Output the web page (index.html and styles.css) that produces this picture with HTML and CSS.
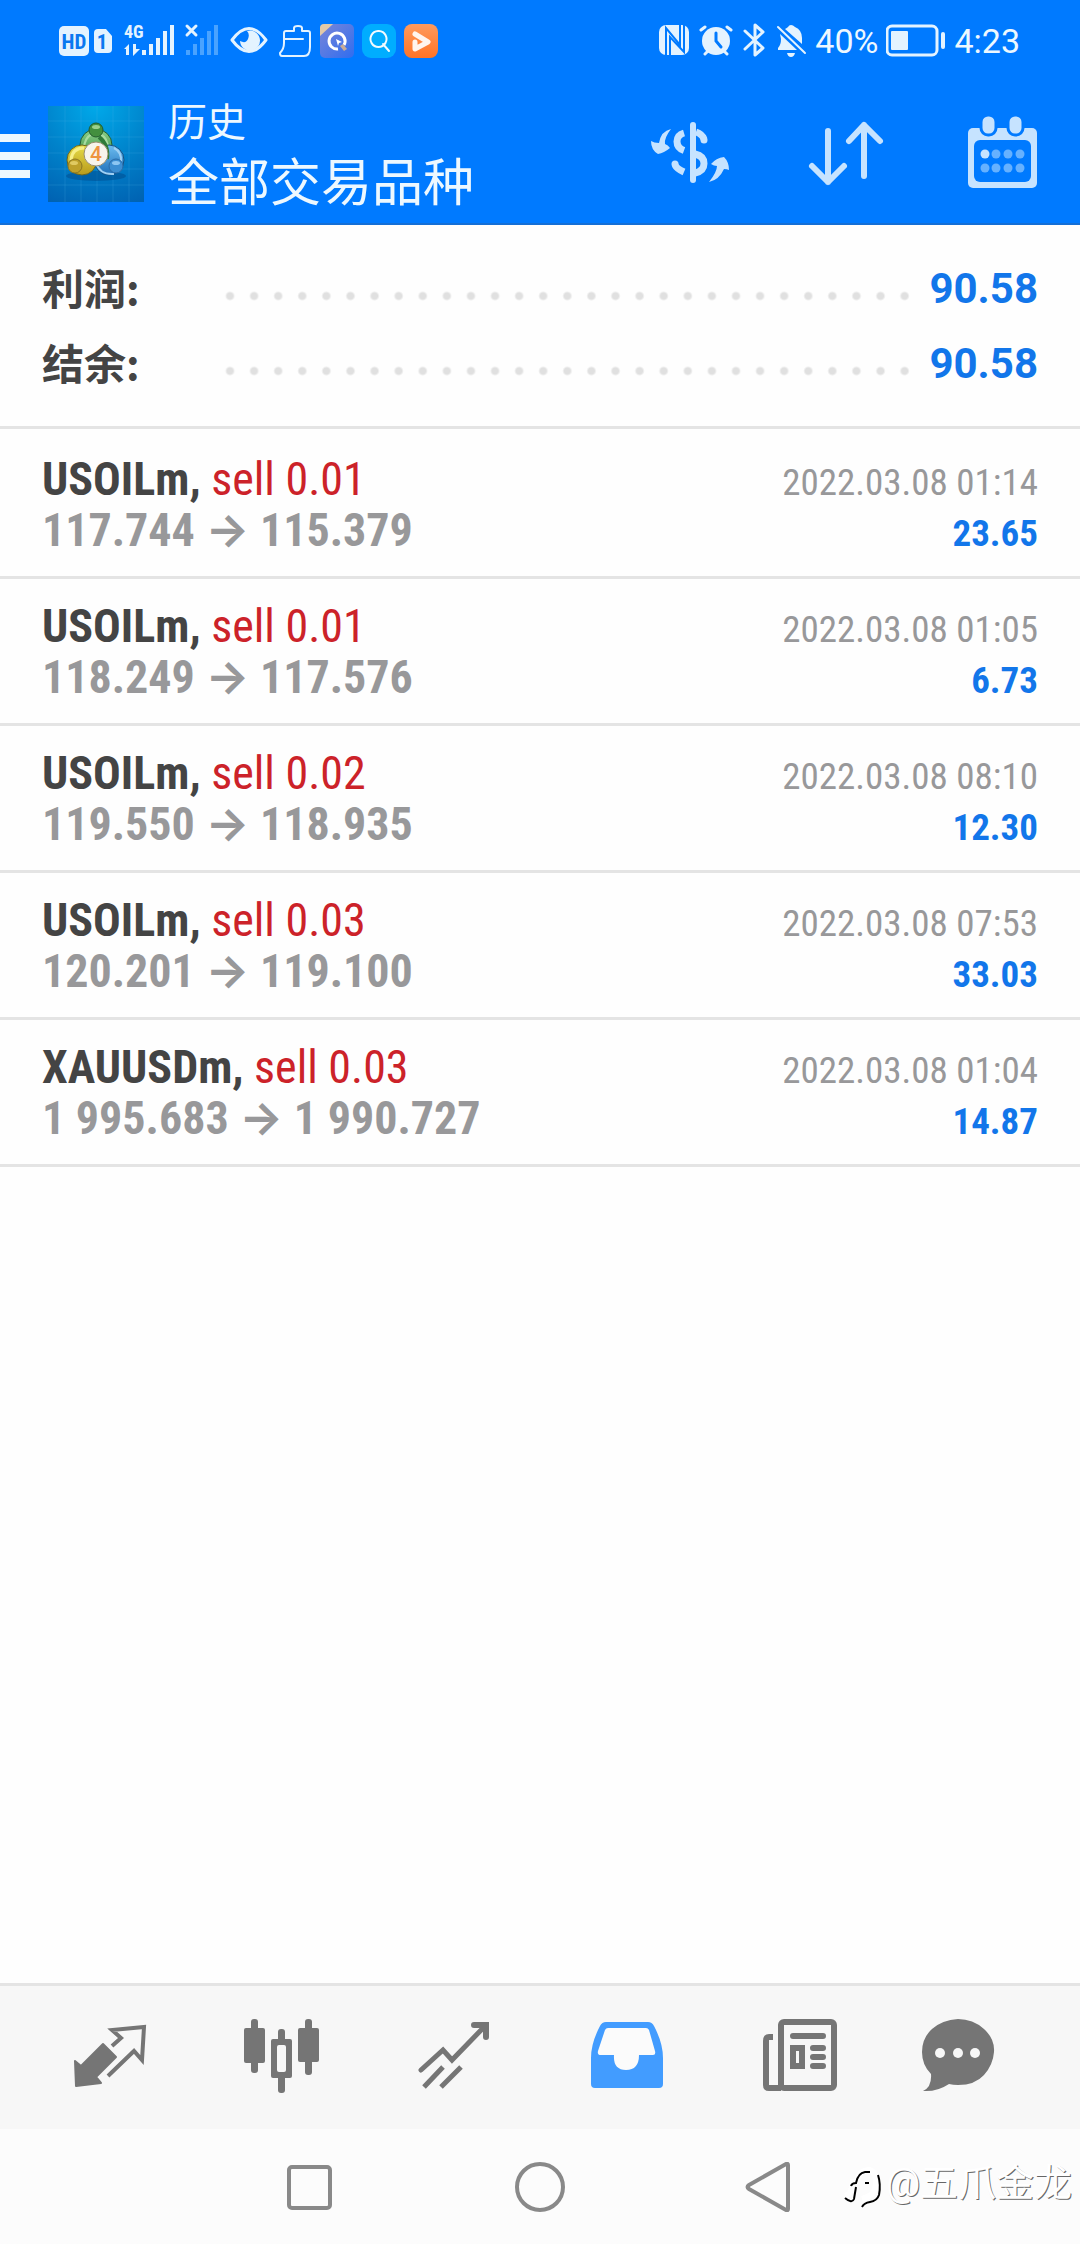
FILE: index.html
```html
<!DOCTYPE html>
<html lang="zh-CN">
<head>
<meta charset="utf-8">
<meta name="viewport" content="width=device-width, initial-scale=1">
<title>历史</title>
<link rel="stylesheet" href="styles.css">
</head>
<body>
<header class="header">
  <div class="status">
    <div class="status-group">
      <svg class="glyph" width="56" height="40" viewBox="58 20 56 40">
        <rect x="59" y="26" width="30" height="30" rx="5"/>
        <path d="M94 33q0-4 4-4h8l6 7v13q0 4-4 4H98q-4 0-4-4z"/>
        <text class="glyph-cut" x="74" y="49" font-size="21" text-anchor="middle">HD</text>
        <text class="glyph-cut" x="102" y="49" font-size="21" text-anchor="middle">1</text>
      </svg>
      <svg class="glyph" width="54" height="40" viewBox="122 20 54 40">
        <text class="glyph-net" x="124" y="38" font-size="18">4G</text>
        <path d="M142 50h4v5h-4zM149 44h4v11h-4zM156 38h4v17h-4zM163 31h4v24h-4zM170 25h4v30h-4z"/>
        <path d="M124 49l5-5v11h-3v-6zM133 44h3v5h4l-7 7z"/>
      </svg>
      <svg class="glyph" width="36" height="40" viewBox="184 20 36 40">
        <path class="dim" d="M186 50h4v5h-4zM193 44h4v11h-4zM200 38h4v17h-4zM207 31h4v24h-4zM214 25h4v30h-4z"/>
        <path class="line" stroke-width="3" d="M187 26l9 9M196 26l-9 9"/>
      </svg>
      <svg class="glyph" width="42" height="40" viewBox="228 20 42 40">
        <path class="line" stroke-width="3" d="M232 40q17-23 34 0q-17 23-34 0z"/>
        <path d="M247 31a10 10 0 1 1-7 10q6 3 8-2t-1-8z"/>
      </svg>
      <svg class="glyph" width="34" height="40" viewBox="278 20 34 40">
        <path class="line" stroke-width="2" d="M294 31v-3q0-2 4-2t4 2v3h6q2 0 2 2v14q0 9-6 9h-22q-2 0-2-3q4-4 4-10V33q0-2 2-2zM284 39h19"/>
      </svg>
      <svg width="34" height="40" viewBox="320 20 34 40">
        <defs><linearGradient id="browser" x2="1" y2="1"><stop offset="0" stop-color="#7a86d8"/><stop offset="1" stop-color="#2f6df0"/></linearGradient></defs>
        <rect x="320" y="24" width="34" height="34" rx="5" fill="url(#browser)"/>
        <path d="M320 36V28q0-4 4-4h9z" fill="#e2c9a8"/>
        <path d="M338 49a8 8 0 1 1 6-4" fill="none" stroke="#fff" stroke-width="3"/>
        <path d="M336 39l6 3-3 1-1 3z" fill="#fff"/>
        <path d="M340 46l3-2 4 5-3 2z" fill="#c8ac98"/>
      </svg>
      <svg width="34" height="40" viewBox="362 20 34 40">
        <rect x="362" y="24" width="34" height="34" rx="9" fill="#00adff"/>
        <path d="M383 44l6 7M378 31a8 8 0 1 0 1 0z" fill="none" stroke="#f0faff" stroke-width="2" stroke-linecap="round"/>
      </svg>
      <svg width="34" height="40" viewBox="404 20 34 40">
        <defs><linearGradient id="video" x2="0" y2="1"><stop offset="0" stop-color="#ff9a5c"/><stop offset="1" stop-color="#ff7326"/></linearGradient></defs>
        <rect x="404" y="24" width="34" height="34" rx="8" fill="url(#video)"/>
        <path d="M415 34l13 8-13 7v-7" fill="none" stroke="#fff5ee" stroke-width="5" stroke-linejoin="round" stroke-linecap="round"/>
      </svg>
    </div>
    <div class="status-group">
      <svg class="glyph" width="34" height="40" viewBox="656 20 34 40">
        <rect x="658" y="25" width="30" height="30" rx="7"/>
        <path d="M665 55V28l14 17V25M669 55V37l14 15V25" fill="none" stroke="#007aff" stroke-width="2"/>
      </svg>
      <svg class="glyph" width="34" height="40" viewBox="698 20 34 40">
        <circle cx="715" cy="41" r="14"/>
        <path class="line" stroke-width="3" d="M700 30l4-3M730 30l-4-3M704 54l3-3M726 54l-3-3"/>
        <path d="M715 33v8l5 6" fill="none" stroke="#007aff" stroke-width="3" stroke-linecap="round"/>
      </svg>
      <svg class="glyph" width="26" height="40" viewBox="740 20 26 40">
        <path class="line" stroke-width="3" d="M744 31l18 17-8 7V25l8 7-18 17"/>
      </svg>
      <svg class="glyph" width="32" height="40" viewBox="774 20 32 40">
        <path d="M784 29q2-1 3-2 1-2 3-2t4 2q7 3 7 11v6zM779 34l17 16h-19v-2q3-3 3-9zM786 53h8q-1 4-4 4t-4-4z"/>
        <path class="line" stroke-width="2" d="M777 27l27 26"/>
      </svg>
      <span class="status-text">40%</span>
      <svg class="glyph" width="60" height="40" viewBox="884 20 60 40">
        <rect class="line" stroke-width="3" x="885" y="26" width="50" height="29" rx="5"/>
        <rect x="889" y="31" width="17" height="19" rx="1"/><rect x="939" y="32" width="4" height="17" rx="2"/>
      </svg>
      <time class="status-text">4:23</time>
    </div>
  </div>
  <div class="appbar">
    <button class="menu" aria-label="菜单">
      <svg width="30" height="90" viewBox="0 108 30 90"><path fill="#edf8ff" d="M0 133h30v8H0zM0 151h30v8H0zM0 169h30v8H0z"/></svg>
    </button>
    <svg class="logo" width="96" height="96" viewBox="0 0 96 96">
      <defs>
        <radialGradient id="sky" cx=".5" cy="0" r="1.1"><stop offset="0" stop-color="#00a9ea"/><stop offset=".5" stop-color="#0084cc"/><stop offset="1" stop-color="#0062b2"/></radialGradient>
        <linearGradient id="green" x2="0" y2="1"><stop offset="0" stop-color="#8fd08a"/><stop offset="1" stop-color="#2f8a3a"/></linearGradient>
        <linearGradient id="gold" x2="0" y2="1"><stop offset="0" stop-color="#e6dc48"/><stop offset="1" stop-color="#b99a1c"/></linearGradient>
        <linearGradient id="blue" x2="0" y2="1"><stop offset="0" stop-color="#6dbdf0"/><stop offset="1" stop-color="#1d6db8"/></linearGradient>
      </defs>
      <path fill="url(#sky)" d="M0 0h96v96H0z"/>
      <path stroke="#4fb8ea" stroke-opacity=".2" fill="none" d="M17 0v96M33 0v96M49 0v96M65 0v96M81 0v96M0 15h96M0 31h96M0 47h96M0 63h96M0 79h96"/>
      <ellipse cx="48" cy="70" rx="30" ry="5" fill="#003f7c" opacity=".4"/>
      <circle cx="48" cy="39" r="16" fill="url(#green)" stroke="#245f31"/>
      <path d="M36 43q0-11 8-15M60 43q0-11-8-15" fill="none" stroke="#a8dba0" stroke-width="2"/>
      <circle cx="34" cy="54" r="15" fill="url(#gold)" stroke="#6f661c"/>
      <path d="M23 54q1-12 13-12" fill="none" stroke="#f6ee86" stroke-width="3"/>
      <circle cx="61" cy="54" r="15" fill="url(#blue)" stroke="#175182"/>
      <path d="M48 57q4 12 18 11M66 42q8 4 7 14" fill="none" stroke="#9fd0f4" stroke-width="2"/>
      <path d="M51 31q10 8 8 22" fill="none" stroke="#2f7a38" stroke-width="4"/>
      <circle cx="48" cy="24" r="7" fill="#438f3e" stroke="#235c2d"/>
      <circle cx="27" cy="60" r="7" fill="#bda02a" stroke="#8a7622"/>
      <circle cx="68" cy="60" r="7" fill="#3b8ed2" stroke="#2a6ba8"/>
      <ellipse cx="48" cy="21" rx="4" ry="2" fill="#9bd08c"/><ellipse cx="26" cy="57" rx="4" ry="2" fill="#e0ca62"/><ellipse cx="68" cy="57" rx="4" ry="2" fill="#8cc6f2"/>
      <circle cx="48" cy="48" r="12" fill="#f7f4ec" stroke="#9a8f70"/>
      <text x="48" y="55" font-size="21" font-weight="500" text-anchor="middle" fill="#ee9440">4</text>
    </svg>
    <div class="titles">
      <h1 class="title">历史</h1>
      <p class="subtitle">全部交易品种</p>
    </div>
    <div class="actions">
      <button class="action" aria-label="交易品种">
        <svg width="90" height="90" viewBox="645 108 90 90" fill="#c6e3ff">
          <rect x="690" y="121" width="6" height="61" rx="3"/>
          <path fill="none" stroke="#c6e3ff" stroke-width="7" d="M684 132q-7 2-7 8.500t7 9M696 131q6 2 8 7M695 153q9 2 9 9.500t-9 9.500"/>
          <path fill="none" stroke="#c6e3ff" stroke-width="7" d="M675 164q2 4 9 7"/>
          <circle cx="704" cy="139" r="3.500"/><circle cx="675" cy="163" r="3.500"/>
          <path d="M671 128q-10 2-12 14q-5 0-8-2q0 9 7 13q6-1 12-6q-2-3-5-4q-1-6 6-15zM709 181q10-2 15-13q3 0 5 1q0-8-5-13q-8 1-13 7q3 2 6 2q0 6-8 16z"/>
        </svg>
      </button>
      <button class="action" aria-label="排序">
        <svg width="90" height="90" viewBox="801 108 90 90" fill="none" stroke="#c6e3ff" stroke-width="6" stroke-linecap="round" stroke-linejoin="round"><path d="M828 130v51M812 165l16 16 16-16M864 175v-51M849 140l15-16 16 16"/></svg>
      </button>
      <button class="action" aria-label="日期">
        <svg width="90" height="90" viewBox="957 108 90 90">
          <rect x="968" y="127" width="69" height="60" rx="5" fill="#c6e3ff"/><rect x="974" y="139" width="57" height="42" rx="6" fill="#007aff"/>
          <g fill="#c6e3ff" stroke="#007aff" stroke-width="3"><rect x="981" y="114" width="15" height="20" rx="7"/><rect x="1008" y="114" width="15" height="20" rx="7"/></g>
          <g fill="#66b1ff"><circle cx="996" cy="153" r="4.500"/><circle cx="1008" cy="153" r="4.500"/><circle cx="1020" cy="153" r="4.500"/><circle cx="985" cy="167" r="4.500"/><circle cx="996" cy="167" r="4.500"/><circle cx="1008" cy="167" r="4.500"/><circle cx="1020" cy="167" r="4.500"/></g>
          <circle cx="985" cy="153" r="4.500" fill="#c6e3ff"/>
        </svg>
      </button>
    </div>
  </div>
</header>

<main class="content">
  <dl class="summary">
    <div class="summary-row"><dt>利润:</dt><dd>90.58</dd></div>
    <div class="summary-row"><dt>结余:</dt><dd>90.58</dd></div>
  </dl>
  <ul class="trades">
    <li class="trade"><span class="deal"><b>USOILm,</b> <span class="side">sell 0.01</span></span><time class="date">2022.03.08 01:14</time><span class="prices">117.744 → 115.379</span><span class="profit">23.65</span></li>
    <li class="trade"><span class="deal"><b>USOILm,</b> <span class="side">sell 0.01</span></span><time class="date">2022.03.08 01:05</time><span class="prices">118.249 → 117.576</span><span class="profit">6.73</span></li>
    <li class="trade"><span class="deal"><b>USOILm,</b> <span class="side">sell 0.02</span></span><time class="date">2022.03.08 08:10</time><span class="prices">119.550 → 118.935</span><span class="profit">12.30</span></li>
    <li class="trade"><span class="deal"><b>USOILm,</b> <span class="side">sell 0.03</span></span><time class="date">2022.03.08 07:53</time><span class="prices">120.201 → 119.100</span><span class="profit">33.03</span></li>
    <li class="trade"><span class="deal"><b>XAUUSDm,</b> <span class="side">sell 0.03</span></span><time class="date">2022.03.08 01:04</time><span class="prices">1 995.683 → 1 990.727</span><span class="profit">14.87</span></li>
  </ul>
</main>

<nav class="tabs">
  <button class="tab" aria-label="行情">
    <svg width="96" height="96" viewBox="62 2010 96 96">
      <path fill="#757575" stroke="#757575" stroke-width="2" stroke-linejoin="round" d="M75 2061l6 5 22-22 13 13-20 20 5 6-25 3z"/>
      <path fill="none" stroke="#757575" stroke-width="4" d="M112 2046l9-8-9-8 32-3-2 33-8-9-26 25"/>
    </svg>
  </button>
  <button class="tab" aria-label="图表">
    <svg width="96" height="96" viewBox="234 2010 96 96" fill="#757575">
      <rect x="244" y="2028" width="21" height="35" rx="2"/><rect x="251" y="2019" width="7" height="54" rx="3"/>
      <rect x="298" y="2028" width="21" height="34" rx="2"/><rect x="305" y="2019" width="7" height="56" rx="3"/>
      <rect x="278" y="2029" width="7" height="64" rx="3"/><rect x="271" y="2039" width="21" height="39" rx="2"/><rect x="277" y="2045" width="9" height="27" rx="2" fill="#f7f7f7"/>
    </svg>
  </button>
  <button class="tab" aria-label="交易">
    <svg width="96" height="96" viewBox="406 2010 96 96" fill="none" stroke="#757575" stroke-width="5" stroke-linecap="round"><path d="M421 2070l22-20 9 10 34-35"/><path stroke-width="6" d="M474 2025h12v12"/><path stroke-linecap="butt" d="M424 2087l19-20M441 2087l20-20"/></svg>
  </button>
  <button class="tab" aria-label="历史" aria-current="page">
    <svg width="96" height="96" viewBox="578 2010 96 96">
      <path fill="#429cff" d="M606 2022h42q4 0 6 4q9 17 9 32v26q0 4-4 4h-64q-4 0-4-4v-26q0-15 9-32q2-4 6-4z"/>
      <path fill="#fbfbfb" d="M608 2028h38q2 0 3 2l6 21q1 4-2 4h-14q0 15-13 15t-12-15h-13q-4 0-3-4l7-21q1-2 3-2z"/>
    </svg>
  </button>
  <button class="tab" aria-label="新闻">
    <svg width="96" height="96" viewBox="750 2010 96 96" fill="none" stroke="#757575" stroke-width="6">
      <rect x="781" y="2022" width="53" height="66" rx="3"/><path d="M773 2037h-4q-3 0-3 4v44q0 3 3 3h12"/>
      <path stroke-linecap="round" d="M793 2036h30M813 2048h10M813 2057h10M813 2066h10"/>
      <rect x="793" y="2048" width="9" height="18"/>
    </svg>
  </button>
  <button class="tab" aria-label="消息">
    <svg width="96" height="96" viewBox="922 2010 96 96">
      <path fill="#757575" d="M931 2074q-9-9-9-22q0-14 10-23t26-10q15 0 26 10t10 23-10 23-26 10q-5 0-9-1q-12 8-26 7q9-4 8-17z"/>
      <g fill="#f7f7f7"><circle cx="940" cy="2053" r="5"/><circle cx="958" cy="2053" r="5"/><circle cx="975" cy="2053" r="5"/></g>
    </svg>
  </button>
</nav>

<footer class="system">
  <button class="key" aria-label="最近任务"><svg width="50" height="50" viewBox="0 0 50 50"><rect x="4" y="5" width="41" height="41" rx="3"/></svg></button>
  <button class="key" aria-label="主屏幕"><svg width="50" height="50" viewBox="0 0 50 50"><circle cx="25" cy="25" r="23"/></svg></button>
  <button class="key" aria-label="返回"><svg width="50" height="50" viewBox="0 0 50 50"><path d="M4 23L41 2q2-1 2 1v44q0 2-2 1L4 27q-3-2 0-4z"/></svg></button>
  <div class="watermark">
    <svg width="46" height="54" viewBox="0 6 46 54" fill="none">
      <path stroke="#fff" stroke-width="6" d="M5 46q7-2 8-14h4q1-11 12-12 8 2 7 14-1 12-14 15"/>
      <path stroke="#000" stroke-width="2" d="M5 48q7 6 9 1l2-12M11 36q1-3 5-3 2-10 9-11h5M25 33h4M38 25q3 9 1 20-2 6-9 7-6 1-8 5"/>
    </svg>
    <span>@五爪金龙</span>
  </div>
</footer>
</body>
</html>
```
FILE: styles.css
```css
* {
  box-sizing: border-box;
  margin: 0;
  padding: 0;
}

body {
  display: flex;
  flex-direction: column;
  min-height: 100vh;
  background: #fefefe;
  color: #444;
  font-family: Roboto, "Noto Sans CJK SC", sans-serif;
}

button {
  border: 0;
  background: none;
  cursor: pointer;
}

svg {
  display: block;
  flex: none;
}

/* Blue header: status line and app bar */
.header {
  background: #007aff;
  border-bottom: 2px solid #146fd6;
  color: #edf8ff;
}

.status {
  display: flex;
  justify-content: space-between;
  height: 80px;
  padding: 20px 60px 20px 58px;
}

.status-group {
  display: flex;
  gap: 8px;
}

.status-text {
  font-size: 34px;
  line-height: 42px;
}

.glyph {
  fill: #e4f3ff;
}

.glyph .line {
  fill: none;
  stroke: #e4f3ff;
  stroke-linecap: round;
  stroke-linejoin: round;
}

.glyph .dim {
  fill: #4aa3ff;
}

.glyph-cut {
  fill: #0a78f0;
  font-family: "Roboto Condensed", Roboto, sans-serif;
  font-weight: 700;
}

.glyph-net {
  font-family: "Roboto Condensed", Roboto, sans-serif;
  font-weight: 700;
}

.appbar {
  display: flex;
  align-items: center;
  height: 143px;
  padding-top: 4px;
}

.logo {
  margin: 0 24px 0 18px;
}

.titles {
  flex: 1;
  padding-top: 6px;
}

.title {
  font-size: 39px;
  font-weight: 400;
  line-height: 54px;
}

.subtitle {
  font-size: 51px;
  line-height: 68px;
}

.actions {
  display: flex;
}

.action {
  display: flex;
  justify-content: center;
  width: 156px;
}

/* Totals */
.content {
  flex: 1;
}

.summary {
  padding: 26px 42px 25px;
  border-bottom: 3px solid #e4e4e4;
}

.summary-row {
  display: flex;
  height: 75px;
  font-size: 42px;
  font-weight: 700;
  line-height: 75px;
}

.summary-row dt {
  width: 176px;
  font-family: "Noto Sans CJK SC", sans-serif;
  line-height: 71px;
}

.summary-row dd {
  display: flex;
  flex: 1;
  color: #1276ea;
}

.summary-row dd::before {
  flex: 1;
  margin-right: 12px;
  background: radial-gradient(circle at 12px 45px, #e0e0e0 3px, transparent 5px) 0 0 / 24px 75px space no-repeat;
  content: "";
}

/* Closed trades */
.trades {
  padding-top: 3px;
  list-style: none;
}

.trade {
  display: grid;
  grid-template-columns: 1fr auto;
  align-items: baseline;
  padding: 22px 42px 20px;
  border-bottom: 3px solid #e4e4e4;
  font-family: "Roboto Condensed", Inter, "Noto Sans CJK SC", sans-serif;
  font-size: 46px;
  line-height: 51px;
}

.side {
  color: #cc2229;
}

.prices {
  color: #98989a;
  font-weight: 700;
}

.date,
.profit {
  font-size: 37px;
  line-height: 40px;
  text-align: right;
}

.date {
  color: #98989a;
}

.profit {
  color: #1276ea;
  font-weight: 700;
}

/* Bottom tabs and system keys */
.tabs {
  display: flex;
  padding: 24px 24px 23px;
  border-top: 3px solid #e4e4e4;
  background: #f7f7f7;
}

.tab {
  display: flex;
  flex: 1;
  justify-content: center;
}

.system {
  position: relative;
  display: flex;
  justify-content: center;
  height: 115px;
  background: #fcfcfc;
}

.key {
  display: flex;
  align-items: center;
  justify-content: center;
  width: 230px;
}

.key svg {
  fill: none;
  stroke: #898989;
  stroke-width: 4px;
}

.watermark {
  position: absolute;
  right: 8px;
  bottom: 34px;
  display: flex;
  align-items: center;
  color: #fff;
  font-size: 38px;
  line-height: 54px;
  text-shadow: 1px 1px 0 #666;
}
```
